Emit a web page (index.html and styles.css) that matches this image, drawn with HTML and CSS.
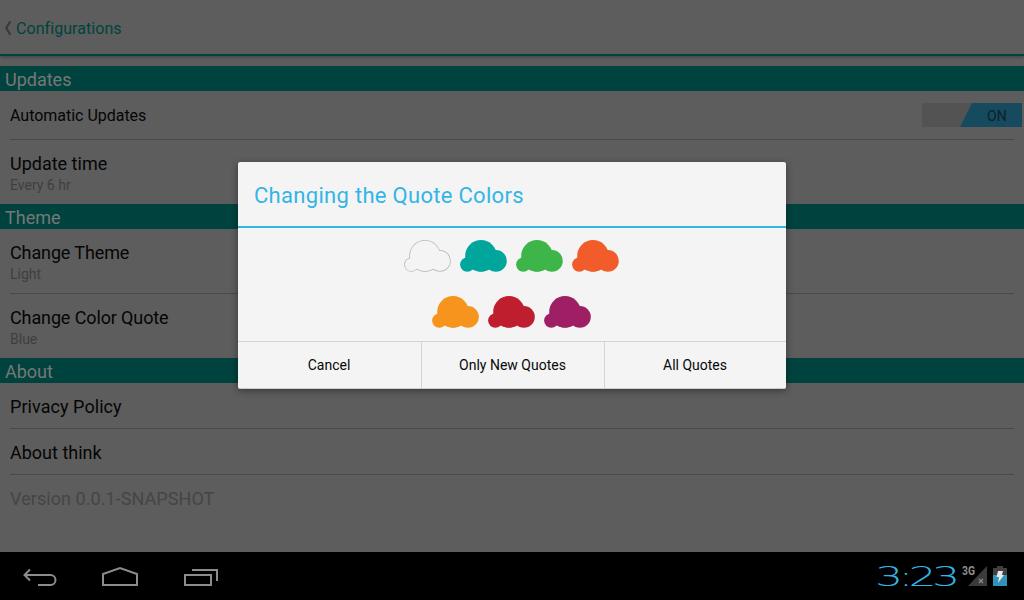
FILE: index.html
```html
<!DOCTYPE html>
<html lang="en">
<head>
<meta charset="utf-8">
<title>Configurations</title>
<link rel="stylesheet" href="styles.css">
</head>
<body>
<div class="screen">
  <header class="action-bar">
    <svg class="up" width="8" height="16" viewBox="0 0 8 16"><path d="M6.300 1.300 2.300 8l4 6.700" fill="none" stroke="#3a3a3a" stroke-width="2.200"/></svg>
    <span class="bar-title">Configurations</span>
  </header>
  <main class="settings">
    <h2 class="section">Updates</h2>
    <div class="row row-switch">
      <span class="label small">Automatic Updates</span>
      <div class="switch"><div class="thumb"><span>ON</span></div></div>
    </div>
    <div class="row double last"><span class="label">Update time</span><span class="hint">Every 6 hr</span></div>
    <h2 class="section">Theme</h2>
    <div class="row double"><span class="label tight">Change Theme</span><span class="hint">Light</span></div>
    <div class="row double last"><span class="label tight">Change Color Quote</span><span class="hint">Blue</span></div>
    <h2 class="section">About</h2>
    <div class="row single"><span class="label wide">Privacy Policy</span></div>
    <div class="row single"><span class="label">About think</span></div>
    <div class="row single last"><span class="label wide version">Version 0.0.1-SNAPSHOT</span></div>
  </main>
  <footer class="system-bar">
    <svg class="nav" width="240" height="48" viewBox="0 0 240 48" fill="none" stroke="#8c8c8c" stroke-width="2">
      <path d="M25 23h25.500a5 5 0 0 1 0 10H38M30 17.500 24.500 23l5.500 5.500"/>
      <path d="M103 33V22l17-6 17 6v11z"/>
      <path d="M185 23h26v10h-26zM192 18h25v11"/>
    </svg>
    <div class="status">
      <div class="clock"><span>3:23</span></div>
      <svg width="48" height="48" viewBox="960 0 48 48">
        <text x="962" y="22.500" class="net" textLength="13" lengthAdjust="spacingAndGlyphs">3G</text>
        <path d="M987 14v20h-19z" fill="#3b3b3b"/>
        <path d="m979 27 4 4m0-4-4 4" stroke="#8c8c8c" stroke-width="1.200"/>
        <path d="M993 16h4v-2h6v2h4v9h-14z" fill="#404040"/>
        <path d="M993 23h14v11h-14z" fill="#3093b8"/>
        <path d="M998 19h5l-1 4h2l-6 8 1-6h-2.500z" fill="#e8e8e8"/>
      </svg>
    </div>
  </footer>
  <section class="dialog">
    <h1 class="dialog-title">Changing the Quote Colors</h1>
    <svg class="defs" width="0" height="0"><defs>
      <g id="cloud"><circle cx="25" cy="25.800" r="15.800"/><circle cx="39.900" cy="30.900" r="10.900"/><circle cx="11.300" cy="34.600" r="7.200"/><ellipse cx="25" cy="31" rx="13" ry="10.700"/><path d="M9.500 26h30v13.200h-27z"/></g>
      <g id="cloud-inner"><circle cx="25" cy="25.800" r="15"/><circle cx="39.900" cy="30.900" r="10.100"/><circle cx="11.300" cy="34.600" r="6.400"/><ellipse cx="25" cy="31" rx="12.200" ry="9.900"/><path d="M10.300 26h29.200v12.400h-26.500z"/></g>
    </defs></svg>
    <div class="palette">
      <div class="swatches">
        <svg class="swatch"><use href="#cloud" fill="#b9b9b9"/><use href="#cloud-inner" fill="#f4f4f4"/></svg>
        <svg class="swatch"><use href="#cloud" fill="#00a69c"/></svg>
        <svg class="swatch"><use href="#cloud" fill="#3eb549"/></svg>
        <svg class="swatch"><use href="#cloud" fill="#f15c2a"/></svg>
      </div>
      <div class="swatches">
        <svg class="swatch"><use href="#cloud" fill="#f7941e"/></svg>
        <svg class="swatch"><use href="#cloud" fill="#be1e2d"/></svg>
        <svg class="swatch"><use href="#cloud" fill="#9e1f63"/></svg>
      </div>
    </div>
    <div class="buttons">
      <div class="button">Cancel</div><div class="button">Only New Quotes</div><div class="button">All Quotes</div>
    </div>
  </section>
</div>
</body>
</html>
```
FILE: styles.css
```css
* { box-sizing: border-box; }
body { margin: 0; font-family: Roboto, sans-serif; }
.screen { position: relative; width: 1024px; height: 600px; background: #5d5d5d; display: flex; flex-direction: column; overflow: hidden; }
.action-bar { height: 56px; flex: none; display: flex; align-items: center; padding: 0 0 0 4px; gap: 4px; border-bottom: 2px solid #00433e; box-shadow: 0 1px 3px rgba(0,0,0,.3); background: #5d5d5d; }
.up { margin-top: 2px; }
.bar-title { color: #00433e; font-size: 16px; line-height: 20px; margin-top: 4px; letter-spacing: .06px; }
.settings { flex: 1; padding-top: 10px; }
.section { margin: 0; height: 25px; padding-left: 5px; background: #00433e; color: #777; font-size: 18px; font-weight: 400; line-height: 27px; }
.row { margin: 0 10px; border-bottom: 1px solid #4a4a4a; display: flex; }
.row.last { border-bottom: 0; }
.row-switch { height: 49px; align-items: center; justify-content: space-between; }
.label { color: #050505; font-size: 18px; line-height: 22px; }
.label.small { font-size: 16px; padding-top: 2px; letter-spacing: -.02px; }
.label.tight { letter-spacing: -.12px; }
.label.wide { letter-spacing: .06px; }
.double { flex-direction: column; height: 65px; padding-top: 13px; }
.double.last { height: 64px; }
.hint { color: #3f3f3f; font-size: 14px; line-height: 18px; margin-top: 1px; }
.single { height: 46px; align-items: center; padding-top: 2px; }
.label.version { color: #454545; }
.switch { width: 100px; height: 24px; margin-right: -8px; background: #535353; display: flex; justify-content: flex-end; }
.thumb { width: 62px; background: #154a5f; clip-path: polygon(12px 0, 100% 0, 100% 100%, 0 100%); padding-left: 27px; font-size: 14px; line-height: 26px; color: #0d2129; }
.system-bar { height: 48px; flex: none; background: #000; display: flex; justify-content: space-between; }
.status { display: flex; padding-right: 16px; }
.clock { width: 84px; height: 48px; color: #33b5e5; }
.clock span { display: inline-block; font-family: "DejaVu Sans", sans-serif; font-weight: 200; font-size: 27px; line-height: 49px; letter-spacing: -2.9px; margin-left: -1px; transform: scaleX(1.64); transform-origin: 0 50%; }
.net { font: 700 12px Roboto, sans-serif; fill: #8c8c8c; }
.dialog { position: absolute; left: 238px; top: 162px; width: 548px; height: 227px; background: #f4f4f4; border-radius: 2px; box-shadow: 0 2px 7px rgba(0,0,0,.4); display: flex; flex-direction: column; border-bottom: 1px solid #ccc; }
.dialog-title { margin: 0; height: 66px; padding-left: 16px; border-bottom: 2px solid #33b5e5; color: #33b5e5; font-size: 22px; font-weight: 400; line-height: 68px; letter-spacing: .3px; }
.defs { position: absolute; }
.palette { height: 113px; padding-top: 2px; }
.swatches { display: flex; justify-content: center; height: 56px; }
.swatch { width: 56px; height: 56px; display: block; }
.buttons { flex: 1; display: grid; grid-template-columns: 184px 183px 181px; border-top: 1px solid #d4d4d4; }
.button { display: flex; align-items: center; justify-content: center; font-size: 14px; color: #080808; border-right: 1px solid #d4d4d4; padding-right: 1px; }
.button:last-child { border-right: 0; }
```
